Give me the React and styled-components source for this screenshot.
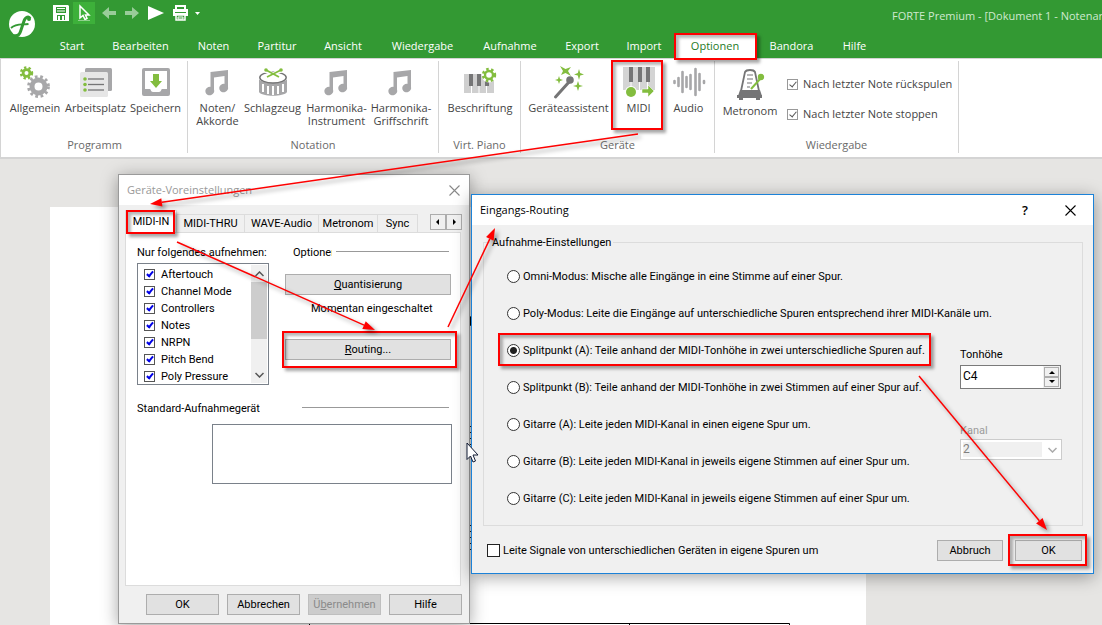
import React from "react";
import styled, { createGlobalStyle, css } from "styled-components";

const GlobalStyle = createGlobalStyle`
  *, *::before, *::after { box-sizing: border-box; }
  body { margin: 0; font-family: "Open Sans", "Noto Sans", sans-serif; font-size: 11px; color: #444; }
  button, input, select { font: inherit; color: inherit; margin: 0; }
`;

const dialogFont = css`
  font-family: Roboto, "Liberation Sans", Arial, sans-serif;
  font-size: 11px;
  line-height: 13px;
  color: #000;
`;

const Root = styled.div`
  position: relative;
  display: flex;
  flex-direction: column;
  min-height: 100vh;
  overflow: hidden;
  background: #e6e5e3;
`;

/* ---------- header ---------- */
const Header = styled.header`
  display: flex;
  height: 58px;
  background: #339933;
  color: #fff;
`;
const LogoCell = styled.div`
  flex: none;
  width: 46px;
  padding: 11px 0 0 9px;
`;
const HeaderMain = styled.div`
  flex: 1;
  min-width: 0;
  display: flex;
  flex-direction: column;
  justify-content: space-between;
`;
const QuickBar = styled.div`
  display: flex;
  gap: 1px;
  height: 26px;
  padding: 2px 0 0 4px;
`;
const QuickButton = styled.button`
  flex: none;
  width: ${(p) => p.$w}px;
  height: 22px;
  padding: 0;
  border: 0;
  display: flex;
  align-items: center;
  justify-content: center;
  background: ${(p) => (p.$on ? "#3db03a" : "transparent")};
  opacity: ${(p) => (p.$dim ? 0.5 : 1)};
`;
const WindowTitle = styled.div`
  width: 210px;
  margin-left: auto;
  white-space: nowrap;
  line-height: 28px;
  color: #cfe9cf;
`;
const TabRow = styled.nav`
  display: flex;
`;
const RibbonTab = styled.button`
  flex: none;
  width: ${(p) => p.$w}px;
  height: 24px;
  padding: 0 0 2px;
  border: 0;
  background: ${(p) => (p.$on ? "#fff" : "transparent")};
  color: ${(p) => (p.$on ? "#1f7a1f" : "#fff")};
`;

/* ---------- ribbon ---------- */
const Ribbon = styled.section`
  display: flex;
  height: 101px;
  padding: 2px 0 4px 1px;
  background: #fff;
  border-top: 1px solid #d4d4d4;
  border-left: 1px solid #d4d4d4;
  border-bottom: 2px solid #d4d4d4;
`;
const Group = styled.div`
  flex: none;
  display: flex;
  flex-direction: column;
  justify-content: space-between;
  width: ${(p) => p.$w}px;
  border-right: 1px solid #d4d4d4;
`;
const Items = styled.div`
  display: flex;
  padding: ${(p) => (p.$low ? 6 : 3)}px 0 0 ${(p) => p.$left}px;
`;
const Item = styled.button`
  flex: none;
  width: ${(p) => p.$w}px;
  padding: 0;
  border: 0;
  background: none;
  display: flex;
  flex-direction: column;
  align-items: center;
  line-height: 13px;
  white-space: nowrap;
`;
const Caption = styled.div`
  text-align: center;
  line-height: 16px;
  color: #6a6a6a;
`;
const CheckStack = styled.div`
  display: flex;
  flex-direction: column;
  gap: 14px;
  padding: 9px 0 0 7px;
`;
const RibbonCheck = styled.label`
  display: flex;
  align-items: center;
  gap: 5px;
  line-height: 16px;
  white-space: nowrap;
`;
const CheckBox = styled.input`
  appearance: none;
  flex: none;
  width: ${(p) => p.$size}px;
  height: ${(p) => p.$size}px;
  border: 1px solid ${(p) => p.$edge};
  background: #fff;
  position: relative;
  &:checked::after {
    content: "";
    position: absolute;
    left: 3px;
    top: 0;
    width: 4px;
    height: 7px;
    border: solid ${(p) => p.$tick};
    border-width: 0 ${(p) => p.$thick}px ${(p) => p.$thick}px 0;
    transform: rotate(40deg);
  }
`;

/* ---------- document ---------- */
const Workspace = styled.main`
  flex: 1;
  padding: 48px 0 0 50px;
`;
const Sheet = styled.div`
  width: 100%;
  max-width: 816px;
  height: 418px;
  background: #fff;
`;

/* ---------- dialogs ---------- */
const Dialog = styled.section`
  ${dialogFont}
  position: absolute;
  left: ${(p) => p.$x}px;
  top: ${(p) => p.$y}px;
  width: ${(p) => p.$w}px;
  border: 1px solid ${(p) => p.$edge};
  background: #f0f0f0;
  box-shadow: 0 3px 16px rgba(0, 0, 0, 0.36);
`;
const TitleBar = styled.header`
  display: flex;
  align-items: center;
  height: 30px;
  padding: 0 8px;
  background: #fff;
  font-family: "Open Sans", "Noto Sans", sans-serif;
  color: ${(p) => (p.$dim ? "#999" : "#000")};
`;
const TitleText = styled.h2`
  flex: 1;
  margin: 0;
  font-size: 11px;
  font-weight: 400;
  line-height: 16px;
`;
const TitleButton = styled.button`
  width: ${(p) => p.$w}px;
  height: 30px;
  padding: 0;
  border: 0;
  background: none;
  font-size: 13px;
  font-weight: 600;
  display: flex;
  align-items: center;
  justify-content: center;
`;
const PushButton = styled.button`
  width: ${(p) => p.$w}px;
  height: 21px;
  padding: 0;
  border: 1px solid #adadad;
  background: #e1e1e1;
  color: #000;
  line-height: 19px;
  &:disabled { background: #ccc; border-color: #bfbfbf; color: #8a8a8a; }
`;
const DeviceBody = styled.div`
  padding: 5px 8px 8px 6px;
`;
const DeviceTabs = styled.div`
  display: flex;
  align-items: flex-end;
  height: 22px;
`;
const DeviceTab = styled.button`
  width: ${(p) => p.$w}px;
  height: ${(p) => (p.$on ? 22 : 18)}px;
  padding: 0;
  border: 1px solid #dcdcdc;
  border-left-width: ${(p) => (p.$on ? 1 : 0)}px;
  border-bottom: 0;
  background: ${(p) => (p.$on ? "#fff" : "#f0f0f0")};
  line-height: 17px;
  white-space: nowrap;
`;
const Spinners = styled.div`
  display: flex;
  align-self: flex-start;
  margin: 4px -1px 0 auto;
`;
const ScrollTab = styled.button`
  width: 16px;
  height: 16px;
  padding: 0;
  border: 1px solid #adadad;
  background: #f0f0f0;
  display: flex;
  align-items: center;
  justify-content: center;
`;
const Pane = styled.div`
  width: 336px;
  height: 354px;
  padding: 13px 9px 0 11px;
  border: 1px solid #dcdcdc;
  background: #fff;
`;
const PaneColumns = styled.div`
  display: flex;
  justify-content: space-between;
`;
const ListSide = styled.div`
  width: 132px;
`;
const OptionSide = styled.div`
  width: 167px;
  display: flex;
  flex-direction: column;
`;
const FieldTitle = styled.div`
  white-space: nowrap;
  overflow: hidden;
  width: ${(p) => (p.$w ? p.$w + "px" : "auto")};
`;
const ListBox = styled.div`
  display: flex;
  justify-content: space-between;
  height: 122px;
  margin-top: 4px;
  padding: 1px;
  border: 1px solid #7a818a;
`;
const CheckList = styled.div`
  padding: 1px 0 0 5px;
`;
const ListRow = styled.label`
  display: flex;
  align-items: center;
  gap: 6px;
  height: 17px;
`;
const ScrollBar = styled.div`
  width: 16px;
  background: #f0f0f0;
  display: flex;
  flex-direction: column;
`;
const ScrollArrow = styled.button`
  width: 16px;
  height: 17px;
  padding: 0;
  border: 0;
  background: none;
  display: flex;
  align-items: center;
  justify-content: center;
`;
const Thumb = styled.div`
  height: 57px;
  margin-bottom: auto;
  background: #cdcdcd;
`;
const Heading = styled.div`
  display: flex;
  align-items: center;
  gap: 3px;
  padding: 0 2px 0 ${(p) => p.$left}px;
`;
const Rule = styled.hr`
  width: ${(p) => p.$w}px;
  height: 1px;
  margin: 0 0 3px auto;
  border: 0;
  background: #999;
`;
const Note = styled.p`
  margin: 7px 0 24px 26px;
  line-height: 13px;
  white-space: nowrap;
`;
const OptionButtons = styled.div`
  display: flex;
  flex-direction: column;
  padding: 15px 0 0 1px;
`;
const DeviceHeading = styled.div`
  display: flex;
  align-items: center;
  padding: 17px 2px 0 0;
`;
const DeviceList = styled.div`
  width: 240px;
  height: 60px;
  margin: 9px 0 0 75px;
  border: 1px solid #7a818a;
`;
const Footer = styled.footer`
  display: flex;
  justify-content: flex-end;
  gap: 8px;
  padding-top: 8px;
  margin-right: -1px;
`;

const RoutingBody = styled.div`
  padding: 11px 10px 12px 11px;
`;
const RoutingSet = styled.fieldset`
  display: flex;
  height: 290px;
  margin: 0;
  padding: 9px 20px 0 23px;
  border: 1px solid #dcdcdc;
  min-width: 0;
`;
const Legend = styled.legend`
  margin-left: -17px;
  padding: 0 2px;
  line-height: 13px;
`;
const RadioList = styled.div`
  flex: 1;
  min-width: 0;
  display: flex;
  flex-direction: column;
`;
const RadioRow = styled.label`
  display: flex;
  align-items: center;
  gap: 3px;
  height: 37px;
  white-space: nowrap;
`;
const Radio = styled.input`
  appearance: none;
  flex: none;
  width: 13px;
  height: 13px;
  border: 1px solid #333;
  border-radius: 50%;
  background: #fff;
  &:checked { background: radial-gradient(circle, #222 0 3px, #fff 4px); }
`;
const SideFields = styled.div`
  flex: none;
  width: 102px;
  display: flex;
  flex-direction: column;
  gap: 35px;
  padding-top: 90px;
`;
const Field = styled.div`
  color: ${(p) => (p.$dim ? "#9c9c9c" : "#000")};
`;
const FieldLabel = styled.label`
  display: block;
  margin-bottom: ${(p) => p.$gap}px;
`;
const PitchBox = styled.div`
  display: flex;
  height: 24px;
  width: 101px;
  border: 1px solid #7a7a7a;
  background: #fff;
`;
const PitchInput = styled.input`
  flex: 1;
  min-width: 0;
  padding: 0 0 2px 2px;
  border: 0;
  font-size: 12px;
`;
const PitchSteps = styled.div`
  display: flex;
  flex-direction: column;
  justify-content: space-between;
  padding: 1px;
  background: #f0f0f0;
`;
const StepButton = styled.button`
  width: 15px;
  height: 10px;
  padding: 0;
  border: 1px solid #adadad;
  background: #f0f0f0;
  display: flex;
  align-items: center;
  justify-content: center;
`;
const SelectShell = styled.div`
  display: flex;
  align-items: center;
  gap: 6px;
  height: 21px;
  padding: 2px 4px 2px 2px;
  border: 1px solid #ccc;
  background: #fff;
`;
const ChannelSelect = styled.select`
  appearance: none;
  flex: 1;
  height: 15px;
  padding: 0;
  border: 0;
  border-radius: 0;
  background: #f0f0f0;
  color: #808080;
  font-size: 12px;
  line-height: 15px;
  opacity: 1;
`;
const RoutingFooter = styled.footer`
  display: flex;
  align-items: center;
  gap: 12px;
  padding: 14px 1px 0 4px;
`;
const FooterCheck = styled.label`
  flex: 1;
  display: flex;
  align-items: center;
  gap: 3px;
`;

/* ---------- annotations over the windows ---------- */
const Frame = styled.div`
  position: absolute;
  pointer-events: none;
  left: ${(p) => p.$x}px;
  top: ${(p) => p.$y}px;
  width: ${(p) => p.$w}px;
  height: ${(p) => p.$h}px;
  border: 2px solid #fe0000;
  box-shadow: 3px 3px 3px rgba(0, 0, 0, 0.35), inset 3px 3px 3px rgba(0, 0, 0, 0.28);
`;
const ArrowLayer = styled.svg`
  position: absolute;
  left: 0;
  top: 0;
  pointer-events: none;
  filter: drop-shadow(3px 3px 2px rgba(0, 0, 0, 0.4));
`;
const Pointer = styled.svg`
  position: absolute;
  left: 466px;
  top: 442px;
`;

function Arrow({ from, to }) {
  const [x1, y1] = from;
  const [x2, y2] = to;
  const len = Math.hypot(x2 - x1, y2 - y1);
  const ux = (x2 - x1) / len;
  const uy = (y2 - y1) / len;
  const bx = x2 - ux * 12;
  const by = y2 - uy * 12;
  return (
    <g>
      <line x1={x1} y1={y1} x2={bx} y2={by} stroke="#fe0000" strokeWidth="1.500" />
      <polygon
        fill="#fe0000"
        points={`${x2},${y2} ${bx - uy * 4.2},${by + ux * 4.2} ${bx + uy * 4.2},${by - ux * 4.2}`}
      />
    </g>
  );
}

/* ---------- icons ---------- */
const GREY = "#a7a7a9";
const DARK = "#757576";
const GREEN = "#83bd3f";

const Icon = ({ children }) => (
  <svg width="36" height="37" viewBox="0 0 36 37" aria-hidden="true">{children}</svg>
);

function Gear({ cx, cy, r, teeth, hole, color, tooth = 2 }) {
  const circ = 2 * Math.PI * (r + tooth / 2);
  const seg = circ / (teeth * 2);
  const band = r - hole;
  return (
    <g fill="none" stroke={color}>
      <circle cx={cx} cy={cy} r={hole + band / 2} strokeWidth={band} />
      <circle cx={cx} cy={cy} r={r + tooth / 2 - 0.3} strokeWidth={tooth + 0.6} strokeDasharray={`${seg} ${seg}`} />
    </g>
  );
}

const GearsIcon = () => (
  <Icon>
    <Gear cx={9.5} cy={9} r={4.8} hole={2} teeth={8} color={GREEN} tooth={1.9} />
    <Gear cx={21.5} cy={22.5} r={9} hole={4} teeth={12} color={GREY} tooth={2.4} />
  </Icon>
);
const WorkspaceIcon = () => (
  <Icon>
    <rect x="7" y="4" width="27" height="23" rx="1.5" fill={GREY} />
    <rect x="2" y="8" width="28" height="25" rx="1.5" fill="#e6e6e6" />
    {[15, 20.5, 26].map((y) => (
      <g key={y}>
        <circle cx="7" cy={y} r="1.8" fill={GREEN} />
        <path d={`M10 ${y}H26`} stroke={DARK} strokeWidth="1.3" />
      </g>
    ))}
  </Icon>
);
const StoreIcon = () => (
  <Icon>
    <rect x="4" y="4" width="28" height="28" rx="2" fill={GREY} />
    <path d="M7 7H29V25H24C23 25 23.500 28 21 28H15C12.500 28 13 25 12 25H7Z" fill="#fff" />
    <path d="M15 10H21V17H24L18 24L12 17H15Z" fill={GREEN} />
  </Icon>
);
const NotesIcon = () => (
  <Icon>
    <path d="M10.500 8L28 6V11.500L14 13.500V27H10.500Z" fill={GREY} />
    <path d="M24.500 8H28V24H24.500Z" fill={GREY} />
    <ellipse cx="9.800" cy="27" rx="4.500" ry="4.200" transform="rotate(-20 9.800 27)" fill={GREY} />
    <ellipse cx="23.700" cy="24" rx="4.500" ry="4.200" transform="rotate(-20 23.700 24)" fill={GREY} />
  </Icon>
);
const DrumIcon = () => (
  <Icon>
    <path d="M4 15V28C7 33 29 33 32 28V15C29 20 7 20 4 15Z" fill={GREY} />
    <path d="M8 20V28M13 22V30M18 22V31M23 22V30M28 20V28" stroke="#fff" strokeWidth="2" />
    <ellipse cx="18" cy="13.500" rx="13.200" ry="5.500" fill="#fff" stroke={DARK} strokeWidth="1.500" />
    <path d="M8 6L26 13M28 6L10 13" stroke="#fff" strokeWidth="4" />
    <path d="M11 6L24 13M26 6L12 13" stroke={GREEN} strokeWidth="1.800" />
    <circle cx="11" cy="6" r="1.800" fill={GREEN} />
    <circle cx="26" cy="6" r="1.800" fill={GREEN} />
  </Icon>
);
const PianoIcon = () => (
  <Icon>
    <rect x="2" y="10" width="30" height="19" fill="#cfcfcf" />
    <path d="M9.500 10V29M17 10V29M24.500 10V29" stroke="#fff" strokeWidth="1" />
    <path d="M7 10H11V22H7ZM15 10H19V22H15ZM23 16H27V22H23Z" fill={DARK} />
    <circle cx="27" cy="11" r="7.500" fill="#fff" />
    <Gear cx={27} cy={11} r={5.2} hole={2.8} teeth={8} color={GREEN} tooth={2} />
  </Icon>
);
const WandIcon = () => (
  <Icon>
    <path d="M4.500 33L18 18" stroke={DARK} strokeWidth="3" strokeLinecap="round" />
    <circle cx="19" cy="16" r="3.800" fill={DARK} />
    <path d="M9 2L14.500 5L20 3L17 7L20 12L14.500 9L10 11L12 7Z" fill={GREEN} />
    <path d="M28 5L29.200 9L33 10.500L29.200 11.500L28 16L26.800 11.500L23 10.500L26.800 9ZM8 12L9 15L12 16L9 17L8 20L7 17L4 16L7 15ZM27 17L28.300 21L32 22L28.300 23L27 27L25.700 23L22 22L25.700 21Z" fill={GREEN} />
  </Icon>
);
const MidiIcon = () => (
  <Icon>
    <rect x="2" y="3" width="32" height="23" fill="#d4d4d4" />
    <path d="M10 3V26M18.500 3V26M26.500 3V26" stroke="#fff" strokeWidth="1" />
    <path d="M8 3H12V18H8ZM17 3H21V18H17ZM25 3H29V18H25Z" fill={DARK} />
    <circle cx="10" cy="28" r="6" fill="#fff" />
    <circle cx="10" cy="28" r="5" fill={GREEN} />
    <path d="M21 25H27V21L33 27L27 33V29H21Z" fill={GREEN} stroke="#fff" strokeWidth=".5" />
  </Icon>
);
const AudioIcon = () => (
  <Icon>
    <path
      d="M3.500 17V19M7.500 14V22M11.500 8V28M15.500 13V23M19.500 11V25M24.500 5V31M28.500 10V26M33 17V19"
      stroke={GREY}
      strokeWidth="2.600"
      strokeLinecap="round"
    />
  </Icon>
);
const MetronomeIcon = () => (
  <Icon>
    <path d="M9 24L13 5Q14 3 18 3Q22 3 23 5L27 24" fill="none" stroke={DARK} strokeWidth="1.800" />
    <path d="M8 23H28L30 29H6Z" fill={DARK} />
    <path d="M5 28H30V31H28V33H24V31H11V33H7V31H5Z" fill={DARK} />
    <path d="M15 8H21M15 12H21M15 16H20M15 20H18" stroke={DARK} strokeWidth="1.200" />
    <path d="M19 22L29 11" stroke={GREEN} strokeWidth="2" />
    <circle cx="29" cy="10" r="3.200" fill={GREEN} />
  </Icon>
);
const Cross = ({ color }) => (
  <svg width="11" height="11" viewBox="0 0 11 11" aria-hidden="true">
    <path d="M.5 .5L10.500 10.500M10.500 .5L.5 10.500" stroke={color} strokeWidth="1.100" />
  </svg>
);
const Chevron = ({ up, color }) => (
  <svg width="9" height="6" viewBox="0 0 9 6" aria-hidden="true">
    <path d={up ? "M.5 5L4.500 1L8.500 5" : "M.5 1L4.500 5L8.500 1"} fill="none" stroke={color} strokeWidth="1.500" />
  </svg>
);
const Triangle = ({ d }) => (
  <svg width="6" height="6" viewBox="0 0 6 6" aria-hidden="true"><path d={d} fill="#000" /></svg>
);

const TABS = [
  ["Start", 52], ["Bearbeiten", 85], ["Noten", 61], ["Partitur", 66], ["Ansicht", 66],
  ["Wiedergabe", 93], ["Aufnahme", 82], ["Export", 62], ["Import", 62], ["Optionen", 80],
  ["Bandora", 73], ["Hilfe", 53],
];
const GROUPS = [
  { name: "Programm", w: 186, left: 4, items: [[GearsIcon, "Allgemein", 58], [WorkspaceIcon, "Arbeitsplatz", 63], [StoreIcon, "Speichern", 57]] },
  { name: "Notation", w: 251, left: 6, items: [[NotesIcon, "Noten/\nAkkorde", 47], [DrumIcon, "Schlagzeug", 63], [NotesIcon, "Harmonika-\nInstrument", 65], [NotesIcon, "Harmonika-\nGriffschrift", 64]] },
  { name: "Virt. Piano", w: 82, left: 7, items: [[PianoIcon, "Beschriftung", 68]] },
  { name: "Geräte", w: 194, left: 4, items: [[WandIcon, "Geräteassistent", 87], [MidiIcon, "MIDI", 53], [AudioIcon, "Audio", 47]] },
];
const FILTERS = ["Aftertouch", "Channel Mode", "Controllers", "Notes", "NRPN", "Pitch Bend", "Poly Pressure"];
const ROUTES = [
  "Omni-Modus: Mische alle Eingänge in eine Stimme auf einer Spur.",
  "Poly-Modus: Leite die Eingänge auf unterschiedliche Spuren entsprechend ihrer MIDI-Kanäle um.",
  "Splitpunkt (A): Teile anhand der MIDI-Tonhöhe in zwei unterschiedliche Spuren auf.",
  "Splitpunkt (B): Teile anhand der MIDI-Tonhöhe in zwei Stimmen auf einer Spur auf.",
  "Gitarre (A): Leite jeden MIDI-Kanal in einen eigene Spur um.",
  "Gitarre (B): Leite jeden MIDI-Kanal in jeweils eigene Stimmen auf einer Spur um.",
  "Gitarre (C): Leite jeden MIDI-Kanal in jeweils eigene Stimmen auf einer Spur um.",
];
const FRAMES = [
  [674, 33, 83, 27], [611, 60, 52, 70], [126, 210, 49, 24],
  [282, 331, 175, 37], [498, 333, 433, 33], [1008, 534, 79, 32],
];

const AppHeader = () => (
  <Header>
    <LogoCell>
      <svg width="27" height="27" viewBox="0 0 27 27" role="img" aria-label="FORTE">
        <circle cx="13" cy="13" r="13" fill="#fff" />
        <path d="M21 7.500C20 5 16.500 5.500 15 10L11.500 20.500C10.500 23.500 9 25.500 5 24.500" fill="none" stroke="#339933" strokeWidth="3" />
        <circle cx="20" cy="8" r="2" fill="#339933" />
        <path d="M2 17C7 12.500 12 14 19.500 13" fill="none" stroke="#339933" strokeWidth="1.800" />
      </svg>
    </LogoCell>
    <HeaderMain>
      <QuickBar>
        <QuickButton $w={22} aria-label="Speichern">
          <svg width="16" height="16" viewBox="0 0 16 16"><path d="M0 0H15L16 1V16H0Z" fill="#fff" /><path d="M3 2H13V8H3ZM4 10H12V15H4Z" fill="#339933" /><path d="M4 3H12V4H4ZM4 5.500H12V6.500H4ZM5 11H7V15H5ZM9 11H11V15H9Z" fill="#fff" /></svg>
        </QuickButton>
        <QuickButton $w={22} $on aria-label="Auswahl">
          <svg width="14" height="18" viewBox="0 0 14 18"><path d="M3 2V14L6 11.500L8 15.500L10 14.500L8.500 11H12Z" fill="none" stroke="#fff" strokeWidth="1.500" /><path d="M1 16.500H13" stroke="#8fd08d" /></svg>
        </QuickButton>
        <QuickButton $w={25} $dim aria-label="Rückgängig">
          <svg width="14" height="12" viewBox="0 0 14 12"><path d="M0 6L7 0V4H14V8H7V12Z" fill="#fff" /></svg>
        </QuickButton>
        <QuickButton $w={19} $dim aria-label="Wiederholen">
          <svg width="14" height="12" viewBox="0 0 14 12"><path d="M14 6L7 0V4H0V8H7V12Z" fill="#fff" /></svg>
        </QuickButton>
        <QuickButton $w={28} aria-label="Abspielen">
          <svg width="16" height="14" viewBox="0 0 16 14"><path d="M0 0L16 7L0 14Z" fill="#fff" /></svg>
        </QuickButton>
        <QuickButton $w={19} aria-label="Drucken">
          <svg width="17" height="16" viewBox="0 0 17 16"><path d="M4 5V1H13V5" fill="none" stroke="#fff" strokeWidth="2" /><path d="M1 4H16V11H1Z" fill="#fff" /><path d="M3 7H14V8H3Z" fill="#339933" /><path d="M4 10H13V15H4Z" fill="#339933" stroke="#fff" strokeWidth="1.500" /><path d="M6 12H11V14H6Z" fill="none" stroke="#fff" /></svg>
        </QuickButton>
        <QuickButton $w={12} aria-label="Leiste anpassen">
          <svg width="5" height="3" viewBox="0 0 5 3"><path d="M0 0H5L2.500 3Z" fill="#fff" /></svg>
        </QuickButton>
        <WindowTitle>FORTE Premium - [Dokument 1 - Notenar</WindowTitle>
      </QuickBar>
      <TabRow>
        {TABS.map(([name, w]) => (
          <RibbonTab key={name} $w={w} $on={name === "Optionen"}>{name}</RibbonTab>
        ))}
      </TabRow>
    </HeaderMain>
  </Header>
);

const Label = ({ text }) => text.split("\n").map((line) => <span key={line}>{line}</span>);

const AppRibbon = () => (
  <Ribbon>
    {GROUPS.map((g) => (
      <Group key={g.name} $w={g.w}>
        <Items $left={g.left}>
          {g.items.map(([Pic, text, w]) => (
            <Item key={text} $w={w}><Pic /><Label text={text} /></Item>
          ))}
        </Items>
        <Caption>{g.name}</Caption>
      </Group>
    ))}
    <Group $w={244}>
      <Items $left={5} $low>
        <Item $w={60}><MetronomeIcon /><Label text="Metronom" /></Item>
        <CheckStack>
          {["Nach letzter Note rückspulen", "Nach letzter Note stoppen"].map((t) => (
            <RibbonCheck key={t}>
              <CheckBox type="checkbox" defaultChecked $size={11} $edge="#999" $tick="#555" $thick={1} />
              {t}
            </RibbonCheck>
          ))}
        </CheckStack>
      </Items>
      <Caption>Wiedergabe</Caption>
    </Group>
  </Ribbon>
);

const DeviceDialog = () => (
  <Dialog $x={118} $y={174} $w={352} $edge="#9a9a9a" role="dialog" aria-label="Geräte-Voreinstellungen">
    <TitleBar $dim>
      <TitleText>Geräte-Voreinstellungen</TitleText>
      <TitleButton $w={14} aria-label="Schließen"><Cross color="#888" /></TitleButton>
    </TitleBar>
    <DeviceBody>
      <DeviceTabs>
        <DeviceTab $w={52} $on>MIDI-IN</DeviceTab>
        <DeviceTab $w={68}>MIDI-THRU</DeviceTab>
        <DeviceTab $w={74}>WAVE-Audio</DeviceTab>
        <DeviceTab $w={59}>Metronom</DeviceTab>
        <DeviceTab $w={40}>Sync</DeviceTab>
        <Spinners>
          <ScrollTab aria-label="Zurück"><Triangle d="M4 0V6L1 3Z" /></ScrollTab>
          <ScrollTab aria-label="Weiter"><Triangle d="M2 0V6L5 3Z" /></ScrollTab>
        </Spinners>
      </DeviceTabs>
      <Pane>
        <PaneColumns>
          <ListSide>
            <FieldTitle>Nur folgendes aufnehmen:</FieldTitle>
            <ListBox>
              <CheckList>
                {FILTERS.map((t) => (
                  <ListRow key={t}>
                    <CheckBox type="checkbox" defaultChecked $size={11} $edge="#555" $tick="#0000e6" $thick={2} />
                    {t}
                  </ListRow>
                ))}
              </CheckList>
              <ScrollBar>
                <ScrollArrow aria-label="Nach oben"><Chevron up color="#555" /></ScrollArrow>
                <Thumb />
                <ScrollArrow aria-label="Nach unten"><Chevron color="#555" /></ScrollArrow>
              </ScrollBar>
            </ListBox>
          </ListSide>
          <OptionSide>
            <Heading $left={9}><FieldTitle $w={39}>Optionen</FieldTitle><Rule $w={113} /></Heading>
            <OptionButtons>
              <PushButton $w={166}><u>Q</u>uantisierung</PushButton>
              <Note>Momentan eingeschaltet</Note>
              <PushButton $w={166}><u>R</u>outing...</PushButton>
            </OptionButtons>
          </OptionSide>
        </PaneColumns>
        <DeviceHeading><FieldTitle>Standard-Aufnahmegerät</FieldTitle><Rule $w={147} /></DeviceHeading>
        <DeviceList />
      </Pane>
      <Footer>
        <PushButton $w={73}>OK</PushButton>
        <PushButton $w={73}>Abbrechen</PushButton>
        <PushButton $w={73} disabled>Ü<u>b</u>ernehmen</PushButton>
        <PushButton $w={73}>Hilfe</PushButton>
      </Footer>
    </DeviceBody>
  </Dialog>
);

const RoutingDialog = () => (
  <Dialog $x={471} $y={194} $w={623} $edge="#1c82d8" role="dialog" aria-label="Eingangs-Routing">
    <TitleBar>
      <TitleText>Eingangs-Routing</TitleText>
      <TitleButton $w={60} aria-label="Hilfe">?</TitleButton>
      <TitleButton $w={30} aria-label="Schließen"><Cross color="#000" /></TitleButton>
    </TitleBar>
    <RoutingBody>
      <RoutingSet>
        <Legend>Aufnahme-Einstellungen</Legend>
        <RadioList>
          {ROUTES.map((t, i) => (
            <RadioRow key={t}><Radio type="radio" name="route" defaultChecked={i === 2} />{t}</RadioRow>
          ))}
        </RadioList>
        <SideFields>
          <Field>
            <FieldLabel htmlFor="pitch" $gap={4}>Tonhöhe</FieldLabel>
            <PitchBox>
              <PitchInput id="pitch" defaultValue="C4" />
              <PitchSteps>
                <StepButton aria-label="Höher"><Triangle d="M0 5H6L3 2Z" /></StepButton>
                <StepButton aria-label="Tiefer"><Triangle d="M0 1H6L3 4Z" /></StepButton>
              </PitchSteps>
            </PitchBox>
          </Field>
          <Field $dim>
            <FieldLabel htmlFor="channel" $gap={2}>Kanal</FieldLabel>
            <SelectShell>
              <ChannelSelect id="channel" disabled defaultValue="2"><option>2</option></ChannelSelect>
              <Chevron color="#aaa" />
            </SelectShell>
          </Field>
        </SideFields>
      </RoutingSet>
      <RoutingFooter>
        <FooterCheck>
          <CheckBox type="checkbox" $size={13} $edge="#222" $tick="#222" $thick={1} />
          Leite Signale von unterschiedlichen Geräten in eigene Spuren um
        </FooterCheck>
        <PushButton $w={66}>Abbruch</PushButton>
        <PushButton $w={67}>OK</PushButton>
      </RoutingFooter>
    </RoutingBody>
  </Dialog>
);

export default function App() {
  return (
    <Root>
      <GlobalStyle />
      <AppHeader />
      <AppRibbon />
      <Workspace>
        <Sheet>
          <svg width="816" height="418" viewBox="0 0 816 418" aria-hidden="true">
            <path d="M80 416.500H739.500V418M259.500 416V418M579.500 416V418" fill="none" stroke="#000" />
            <path d="M419.500 219V244M419 219.500H422M419 225.500H422M419 231.500H422M419 237.500H422M419.500 318V343M419 318.500H422M419 324.500H422M419 330.500H422M419 336.500H422M419 342.500H422" stroke="#222" />
            <ellipse cx="423" cy="114" rx="4" ry="6" fill="#000" />
          </svg>
        </Sheet>
      </Workspace>
      <DeviceDialog />
      <RoutingDialog />
      {FRAMES.map(([x, y, w, h]) => (
        <Frame key={x} $x={x} $y={y} $w={w} $h={h} />
      ))}
      <ArrowLayer width="1102" height="625" viewBox="0 0 1102 625" aria-hidden="true">
        <Arrow from={[638, 134]} to={[150, 204]} />
        <Arrow from={[177, 242]} to={[375, 330]} />
        <Arrow from={[448, 327]} to={[495, 228]} />
        <Arrow from={[919, 376]} to={[1047, 530]} />
      </ArrowLayer>
      <Pointer width="13" height="21" viewBox="0 0 13 21" aria-hidden="true">
        <path d="M1 1V17.500L4.500 14L7 20L9.500 19L7 13H12Z" fill="#fff" stroke="#111a33" />
      </Pointer>
    </Root>
  );
}
